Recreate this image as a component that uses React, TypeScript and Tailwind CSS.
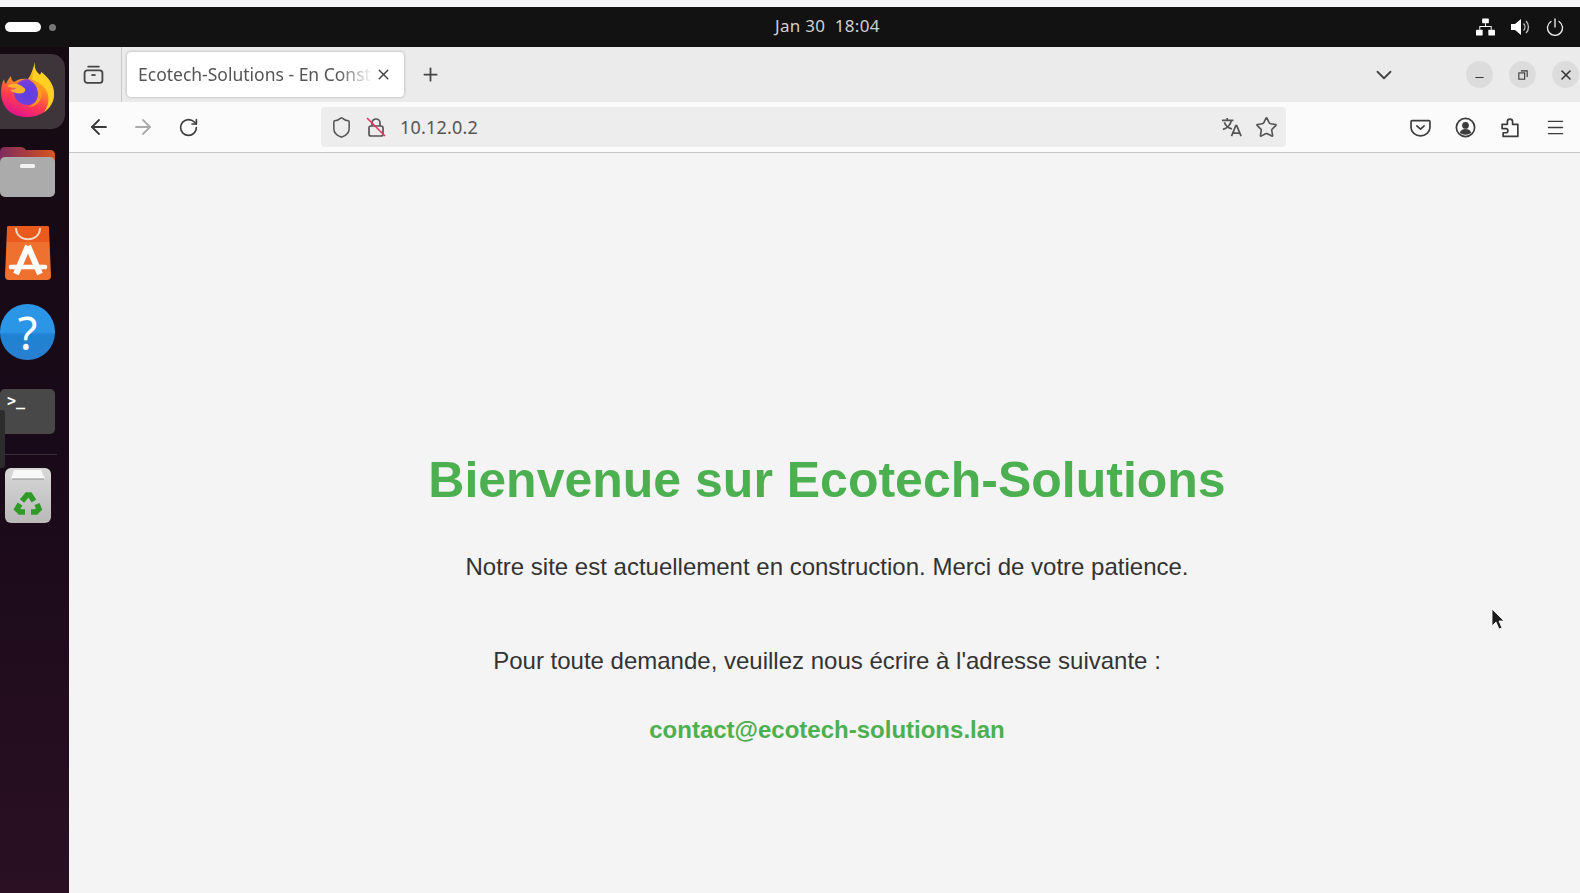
import React from "react";
import { ArrowLeft, ArrowRight, RotateCw, Shield, Star, ChevronDown, Plus, X, Menu, Minus } from "lucide-react";

function Firefox() {
  return (
    <svg viewBox="0 0 56 56" className="w-[56px] h-[56px] -mt-[3px]">
      <defs>
        <linearGradient id="ffo" x1="0.75" y1="0" x2="0.35" y2="1">
          <stop offset="0" stopColor="#ffe226" />
          <stop offset="0.4" stopColor="#ff9a1f" />
          <stop offset="0.72" stopColor="#ff3b4e" />
          <stop offset="1" stopColor="#e3128f" />
        </linearGradient>
        <radialGradient id="ffp" cx="0.5" cy="0.55" r="0.6">
          <stop offset="0" stopColor="#5b3fe0" />
          <stop offset="0.7" stopColor="#6d3fdc" />
          <stop offset="1" stopColor="#a93cc4" />
        </radialGradient>
      </defs>
      <path d="M35 1c-1 5 1 9 5 12 1-1 1-2 1-3 8 6 13 13 13 22 0 13-11 23-27 23S1 45 1 30c0-5 1-9 3-13 0 2 1 4 2 5 1-3 3-6 5-8 0 3 1 5 3 6 4-3 9-4 14-3 3-4 5-10 7-17z" fill="url(#ffo)" />
      <path d="M35 1c-1 5 1 9 5 12 1-1 1-2 1-3 8 6 13 13 13 22 0 8-4 14-10 18 4-5 5-11 4-17-1-7-8-13-16-15 1-5 2-11 3-17z" fill="#ffcf22" />
      <circle cx="27" cy="30" r="13" fill="url(#ffp)" />
      <path d="M28 17c8 1 14 7 14 14 0 8-6 14-14 14 6-2 10-7 10-13 0-7-4-12-10-15z" fill="#ff9a1f" />
      <path d="M7 24c5-3 11-3 16 1 3 2 3 4 0 6-5 1-9 0-13-3 3 0 5-1 6-2-3 0-6-1-9-2z" fill="#ffb12b" />
    </svg>
  );
}

function Files() {
  return (
    <svg viewBox="0 0 56 54" className="w-[56px] h-[54px]">
      <defs>
        <linearGradient id="fld" x1="0" y1="0" x2="1" y2="0">
          <stop offset="0" stopColor="#7d2a5e" />
          <stop offset="1" stopColor="#d9541e" />
        </linearGradient>
      </defs>
      <path d="M0 8q0-5 5-5h16q3 0 5 3h24q5 0 5 5v14H0z" fill="url(#fld)" />
      <rect x="0" y="13" width="55" height="40" rx="5" fill="#ababab" />
      <rect x="20" y="20" width="15" height="4" rx="1.5" fill="#f2f2f2" />
    </svg>
  );
}

function AppCenter() {
  return (
    <svg viewBox="0 0 46 54" className="w-[46px] h-[54px]">
      <path d="M4 0h38q2 0 2 3l2 47q0 4-4 4H4q-4 0-4-4L2 3q0-3 2-3z" fill="#ef7130" />
      <path d="M3 0h40q1 0 1 3v13H2V3q0-3 1-3z" fill="#e95a1c" />
      <path d="M11 2c0 15 24 15 24 0" fill="none" stroke="#f6d8c6" strokeWidth="2" />
      <path d="M23 20L11 48M23 20l12 28" stroke="#fff" strokeWidth="6" fill="none" />
      <path d="M6 41h34" stroke="#fff" strokeWidth="4.500" strokeLinecap="round" />
    </svg>
  );
}

function Help() {
  return (
    <div className="w-[55px] h-14 rounded-full bg-[linear-gradient(#2b95e6_0%,#2b95e6_50%,#1f82d2_55%,#2a7fd0_100%)] flex items-center justify-center">
      <span className="text-white text-[45px] leading-none font-['Noto_Sans',sans-serif]">?</span>
    </div>
  );
}

function Terminal() {
  return (
    <div className="w-[55px] h-[45px] rounded-[5px] bg-[#484848] px-[7px] py-[3px]">
      <span className="block text-white text-[15px] leading-[18px] font-bold font-['DejaVu_Sans_Mono',monospace]">&gt;_</span>
    </div>
  );
}

function Trash() {
  return (
    <svg viewBox="0 0 46 55" className="w-[46px] h-[55px]">
      <defs>
        <linearGradient id="tr" x1="0" y1="0" x2="0" y2="1">
          <stop offset="0" stopColor="#d8d8d8" />
          <stop offset="1" stopColor="#b9b9b9" />
        </linearGradient>
      </defs>
      <rect x="0" y="0" width="46" height="55" rx="6" fill="url(#tr)" />
      <path d="M6 11l3-9h27l4 9z" fill="#f8f8f8" />
      <path d="M7 11h32" stroke="#8f8f8f" strokeWidth="1" />
      <g fill="none" stroke="#2f9a27" strokeWidth="5.500">
        <path d="M17 33l5-6h3l4 6" />
        <path d="M32 36l2 5-3 3h-5" />
        <path d="M20 44h-5l-3-3 3-5" />
      </g>
    </svg>
  );
}

function Dock() {
  return (
    <aside className="relative w-[69px] shrink-0 bg-[linear-gradient(#150a12,#1a0a1a_55%,#2b1024)] flex flex-col items-start">
      <div className="w-[65px] h-[75px] mt-[7px] rounded-r-[14px] bg-[#3d3539] flex items-center">
        <Firefox />
      </div>
      <div className="mt-[15px]">
        <Files />
      </div>
      <div className="mt-[28px] ml-[5px]">
        <AppCenter />
      </div>
      <div className="mt-[24px]">
        <Help />
      </div>
      <div className="mt-[29px]">
        <Terminal />
      </div>
      <div className="mt-[20px] w-[57px] h-px bg-[#3a3035]" />
      <div className="mt-[13px] ml-[5px]">
        <Trash />
      </div>
      <div className="absolute left-0 top-[363px] w-[5px] h-[58px] bg-[#2c2c2c] rounded-r-[3px]" />
    </aside>
  );
}

function TopBar() {
  return (
    <div className="h-[40px] shrink-0 bg-[#121212] flex items-center justify-between pl-[5px] pr-[16px] relative">
      <div className="flex items-center gap-[8px]">
        <div className="w-[36px] h-[10px] rounded-full bg-white" />
        <div className="w-[7px] h-[7px] rounded-full bg-[#777]" />
      </div>
      <div className="absolute left-[775px] -top-px h-full flex items-center text-[#d0d0d0] text-[17px] tracking-[0.3px] font-['Noto_Sans',sans-serif] whitespace-pre">Jan 30  18:04</div>
      <div className="flex items-center gap-[16px] text-white">
        <svg viewBox="0 0 20 18" className="w-[19px] h-[18px]" fill="currentColor">
          <rect x="6.5" y="0" width="7" height="5" rx="0.5" />
          <rect x="0" y="12" width="7" height="6" rx="0.5" />
          <rect x="13" y="12" width="7" height="6" rx="0.5" />
          <path d="M9.5 5h1v3h6v4h-1V9h-11v3h-1V8h6z" />
        </svg>
        <svg viewBox="0 0 19 18" className="w-[19px] h-[18px]">
          <path d="M0 6h4l6-5v16l-6-5H0z" fill="#fff" />
          <path d="M12.5 5.5a5 5 0 0 1 0 7M15 3a8.5 8.5 0 0 1 0 12" fill="none" stroke="#bbb" strokeWidth="1.4" />
        </svg>
        <svg viewBox="0 0 18 18" className="w-[18px] h-[18px]" fill="none" stroke="#e6e6e6" strokeWidth="1.4">
          <path d="M9 1v8" strokeLinecap="round" />
          <path d="M5 3.5a7.5 7.5 0 1 0 8 0" strokeLinecap="round" />
        </svg>
      </div>
    </div>
  );
}

function WindowBtn({ children }: { children: React.ReactNode }) {
  return <div className="w-[27px] h-[27px] rounded-full bg-[#dcdcdc] flex items-center justify-center text-[#333]">{children}</div>;
}

function TabStrip() {
  return (
    <div className="h-[55px] shrink-0 bg-[#ebebeb] flex items-center">
      <div className="w-[53px] h-full border-r border-[#c9c9c9] flex items-center justify-center pr-[4px] text-[#444]">
        <svg viewBox="0 0 20 20" className="w-[21px] h-[21px]" fill="none" stroke="currentColor" strokeWidth="1.7">
          <path d="M5 2.5h10" strokeLinecap="round" />
          <rect x="1.5" y="6" width="17" height="12" rx="2.5" />
          <path d="M8 10.5h4" />
        </svg>
      </div>
      <div className="ml-[5px] w-[277px] h-[45px] rounded-[4px] bg-white shadow-[0_0_3px_rgba(0,0,0,0.3)] flex items-center pl-[11px] pr-[12px] gap-[2px]">
        <span className="flex-1 min-w-0 whitespace-nowrap text-[17.500px] text-[#555] font-['Noto_Sans',sans-serif] [mask-image:linear-gradient(to_right,#000_85%,transparent)]">Ecotech-Solutions - En Const</span>
        <X className="w-[17px] h-[17px] text-[#444] shrink-0" strokeWidth={2} />
      </div>
      <Plus className="w-[21px] h-[21px] ml-[16px] text-[#444]" strokeWidth={2} />
      <div className="flex-1" />
      <ChevronDown className="w-[26px] h-[26px] text-[#444] mr-[69px]" strokeWidth={1.7} />
      <div className="flex items-center gap-[16px] mr-[1px]">
        <WindowBtn><Minus className="w-[13px] h-[13px] translate-y-[3px]" strokeWidth={1.8} /></WindowBtn>
        <WindowBtn>
          <svg viewBox="0 0 12 12" className="w-[10px] h-[10px]" fill="none" stroke="currentColor" strokeWidth="1.300">
            <rect x="1" y="3.5" width="7" height="7.5" />
            <path d="M3.5 1h7.500v7.500" />
          </svg>
        </WindowBtn>
        <WindowBtn><X className="w-[16px] h-[16px]" strokeWidth={2.4} /></WindowBtn>
      </div>
    </div>
  );
}

function NavBar() {
  return (
    <div className="h-[51px] shrink-0 bg-[#fbfbfb] border-b border-[#c6c6c6] flex items-center">
      <div className="w-[60px] flex justify-center"><ArrowLeft className="w-[24px] h-[24px] text-[#3a3a3a]" strokeWidth={1.8} /></div>
      <ArrowRight className="w-[24px] h-[24px] ml-[2px] text-[#ababab]" strokeWidth={1.8} />
      <RotateCw className="w-[21px] h-[21px] ml-[23px] text-[#3f3f3f]" strokeWidth={1.9} />
      <div className="ml-[122px] w-[965px] h-[40px] rounded-[4px] bg-[#ededed] flex items-center pl-[9px] pr-[8px]">
        <Shield className="w-[23px] h-[23px] text-[#555]" strokeWidth={1.6} />
        <div className="relative w-[20px] h-[20px] ml-[13px]">
          <svg viewBox="0 0 20 20" className="w-[20px] h-[20px]" fill="none">
            <path d="M6 9V6a4 4 0 0 1 8 0v3" stroke="#555" strokeWidth="1.7" />
            <rect x="3" y="9" width="14" height="10" rx="2" stroke="#555" strokeWidth="1.7" />
            <path d="M1 1l18 18" stroke="#f0315f" strokeWidth="1.6" />
          </svg>
        </div>
        <span className="ml-[14px] text-[18px] text-[#555] font-['Noto_Sans',sans-serif] tracking-[0.2px]">10.12.0.2</span>
        <div className="flex-1" />
        <svg viewBox="0 0 22 22" className="w-[21px] h-[21px] text-[#555]" fill="none" stroke="currentColor" strokeWidth="1.8">
          <path d="M1 3.500h12M6.500 1v2.500M11 3.500c-1 4-4 8-9 9.500M3.500 5.500c1 3 4 6 8 7" />
          <path d="M11 20l4.500-11h1L21 20M12.500 17h7" />
        </svg>
        <Star className="w-[23px] h-[23px] ml-[13px] text-[#555]" strokeWidth={1.7} />
      </div>
      <div className="flex-1" />
      <div className="flex items-center gap-[24px] pr-[14px] text-[#3c3c3c]">
        <svg viewBox="0 0 20 20" className="w-[21px] h-[21px]" fill="none" stroke="currentColor" strokeWidth="1.6">
          <path d="M2 3.500h16a1 1 0 0 1 1 1V10a9 8 0 0 1-18 0V4.500a1 1 0 0 1 1-1z" />
          <path d="M6.500 8.500l3.500 3 3.500-3" strokeLinecap="round" strokeLinejoin="round" />
        </svg>
        <svg viewBox="0 0 20 20" className="w-[21px] h-[21px]">
          <circle cx="10" cy="10" r="8.700" fill="none" stroke="currentColor" strokeWidth="1.600" />
          <circle cx="10" cy="8" r="3.200" fill="currentColor" />
          <path d="M4.500 15c1-2.500 3-3.500 5.500-3.500s4.500 1 5.500 3.500c-3 2.500-8 2.500-11 0z" fill="currentColor" />
        </svg>
        <svg viewBox="0 0 20 20" className="w-[21px] h-[21px]" fill="none" stroke="currentColor" strokeWidth="1.6" strokeLinejoin="round">
          <path d="M2 7h5V4.500a2.500 2.500 0 0 1 5 0V7h5v11.500H3V15h2.500a2 2 0 0 0 0-4H2z" />
        </svg>
        <Menu className="w-[21px] h-[21px]" strokeWidth={1.7} />
      </div>
    </div>
  );
}

function Page() {
  return (
    <main className="relative flex-1 bg-[#f4f4f4] flex flex-col items-center pl-[5px] font-['Liberation_Sans',Arial,sans-serif]">
      <h1 className="mt-[299px] text-[50px] leading-[56px] font-bold text-[#4caf50]">Bienvenue sur Ecotech-Solutions</h1>
      <p className="mt-[46px] text-[24px] leading-[26px] text-[#333]">Notre site est actuellement en construction. Merci de votre patience.</p>
      <p className="mt-[68px] text-[24px] leading-[26px] text-[#333]">Pour toute demande, veuillez nous écrire à l'adresse suivante :</p>
      <a href="#" className="mt-[43px] text-[24px] leading-[26px] font-bold text-[#4caf50]">contact@ecotech-solutions.lan</a>
      <svg viewBox="0 0 16 24" className="absolute left-[1422px] top-[455px] w-[16px] h-[24px]">
        <path d="M1 1v17l4-4 3 7 3-1-3-7h5z" fill="#1c1c1c" stroke="#fff" strokeWidth="0.8" />
      </svg>
    </main>
  );
}

export default function App() {
  return (
    <div className="w-[1580px] h-[893px] overflow-hidden flex flex-col bg-[#f6f6f9]">
      <div className="h-[7px] shrink-0" />
      <TopBar />
      <div className="flex-1 flex min-h-0">
        <Dock />
        <div className="flex-1 flex flex-col min-w-0">
          <TabStrip />
          <NavBar />
          <Page />
        </div>
      </div>
    </div>
  );
}
